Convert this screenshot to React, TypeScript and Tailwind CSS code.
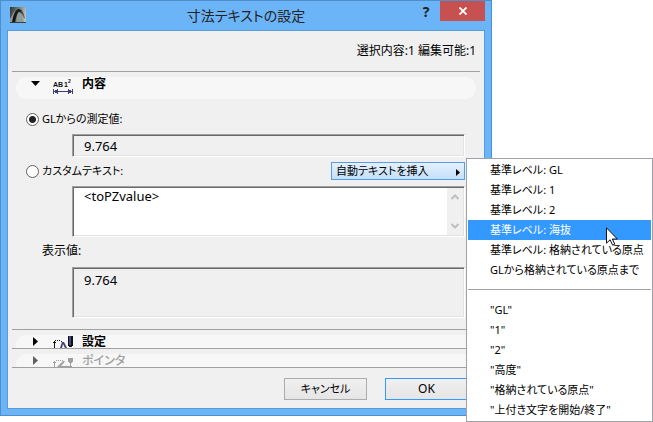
import React from "react";

const levelItems = [
  "基準レベル: GL",
  "基準レベル: 1",
  "基準レベル: 2",
  "基準レベル: 海抜",
  "基準レベル: 格納されている原点",
  "GLから格納されている原点まで",
];

const textItems = [
  '"GL"',
  '"1"',
  '"2"',
  '"高度"',
  '"格納されている原点"',
  '"上付き文字を開始/終了"',
];

const sunken =
  "w-full border border-t-[#a0a0a0] border-l-[#a0a0a0] border-r-white border-b-white shadow-[inset_1px_1px_#696969,inset_-1px_-1px_#e3e3e3]";

const AppLogo = () => (
  <svg className="h-4 w-4" viewBox="0 0 16 16" aria-hidden="true">
    <defs>
      <linearGradient id="logoBg" x1="0" y1="0" x2="1" y2="0.300">
        <stop offset="0" stopColor="#2c3230" />
        <stop offset="0.500" stopColor="#6f7b79" />
        <stop offset="1" stopColor="#b8c0c0" />
      </linearGradient>
      <linearGradient id="logoArch" x1="0" y1="0" x2="1" y2="0">
        <stop offset="0" stopColor="#0e1110" />
        <stop offset="0.600" stopColor="#1f2423" />
        <stop offset="1" stopColor="#7a8583" />
      </linearGradient>
    </defs>
    <rect width="16" height="16" fill="url(#logoBg)" />
    <path d="M0 16V12L4 5 8 2 6 8 4 16z" fill="#8f9794" />
    <path d="M8 4c3 1 5 5 6 12H7c0-5 0-9 1-12z" fill="#919c9a" />
    <path d="M2 16C3 9 5 2 9 2c3 0 5 4 6 9l-1 1c-1-4-3-7-5-7-2 1-3 6-4 11z" fill="url(#logoArch)" />
    <path d="M0 15h16v1H0z" fill="#39413f" />
  </svg>
);

const DimensionIcon = () => (
  <svg className="h-4 w-[21px]" viewBox="0 0 21 16" aria-hidden="true">
    <g fontFamily="Liberation Sans" fontWeight="700" fill="#111">
      <text x="0" y="8" fontSize="7">AB</text>
      <text x="11" y="8" fontSize="7">1</text>
      <text x="15" y="4" fontSize="5">2</text>
    </g>
    <g fill="#3e3e78" shapeRendering="crispEdges">
      <path d="M0 10h1v5H0zM19 10h1v5h-1zM1 12h18v1H1z" />
      <path d="M2 11h2v3H2zM4 10h1v5H4zM16 11h2v3h-2zM15 10h1v5h-1z" />
    </g>
  </svg>
);

const SettingsIcon = () => (
  <svg className="h-[13px] w-[21px]" viewBox="0 0 21 13" aria-hidden="true">
    <g shapeRendering="crispEdges" fill="#111">
      <path d="M1 6h1v7H1zM0 7h1v1H0zM2 7h1v1H2zM2 5h1v1H2zM4 5h1v1H4zM6 5h1v1H6zM8 6h1v1H8z" />
      <path d="M15 1h5v10h-1v1h-3v-1h-1z" />
      <path d="M16 1h2v9h-2z" fill="#46468c" />
    </g>
    <path d="M7 13l2-6h2l3 6h-2l-2-4-1 4z" fill="#3e3e78" />
  </svg>
);

const PointerIcon = () => (
  <svg className="h-[13px] w-[21px]" viewBox="0 0 21 13" aria-hidden="true">
    <g shapeRendering="crispEdges" fill="#a0a0a0">
      <path d="M1 7h1v6H1zM0 8h1v1H0zM2 8h1v1H2zM3 6h1v1H3zM5 6h1v1H5zM7 6h1v1H7zM9 6h1v1H9z" />
      <path d="M15 4h5v4h-1v1h-3V8h-1zM17 9h1v3h-1zM5 12h14v1H5z" />
    </g>
    <path d="M4 13l3-3 3-3h2l-2 3-3 3z" fill="#a0a0a0" />
  </svg>
);

const Cursor = () => (
  <svg
    className="pointer-events-none absolute top-[7px] right-[33px] z-10 h-[19px] w-3"
    viewBox="0 0 12 19"
    aria-hidden="true"
  >
    <path
      d="M.5 .8v15.4l3.6-3.4 2.5 5.4 2.2-1-2.5-5.2h5z"
      fill="#fff"
      stroke="#111"
      strokeWidth="1"
    />
  </svg>
);

const ClosedPanel = (props: { title: string; icon: React.ReactNode; disabled?: boolean }) => {
  return (
    <section className="h-[19px] overflow-hidden border-b border-[#a0a0a0] pt-[5px]">
      <button
        disabled={props.disabled}
        aria-expanded="false"
        className="mx-1 flex h-[22px] w-[calc(100%-8px)] items-start rounded-full bg-[#f7f7f7] pl-[17px] leading-[14px] font-bold text-black disabled:font-medium disabled:text-[#a0a0a0]"
      >
        <svg className="mt-[2px] h-[9px] w-[5px]" viewBox="0 0 5 9" aria-hidden="true">
          <path d="M0 0v9l5-4.500z" fill={props.disabled ? "#606060" : "#000"} />
        </svg>
        <span className="ml-[15px]">{props.icon}</span>
        <span className="ml-2">{props.title}</span>
      </button>
    </section>
  );
};

const MenuItem = (props: { label: string; active?: boolean }) => {
  return (
    <li className="relative" role="none">
      <button
        role="menuitem"
        className={
          props.active
            ? "block h-5 w-full bg-[#3399ff] pl-[22px] text-left leading-5 whitespace-nowrap text-white"
            : "block h-5 w-full pl-[22px] text-left leading-5 whitespace-nowrap text-black"
        }
      >
        {props.label}
      </button>
      {props.active && <Cursor />}
    </li>
  );
};

const AutoTextMenu = () => {
  return (
    <ul
      role="menu"
      className="absolute -top-1 left-[calc(100%+1px)] z-10 w-[187px] border border-[#a0a0a8] bg-white p-px text-[11px]"
    >
      {levelItems.map((label, i) => (
        <MenuItem key={label} label={label} active={i === 3} />
      ))}
      <li role="separator" className="mt-[9px] mb-[10px] h-px bg-[#a0a0a0]" />
      {textItems.map((label) => (
        <MenuItem key={label} label={label} />
      ))}
    </ul>
  );
};

const Radio = (props: { id: string; label: string; checked?: boolean }) => {
  return (
    <div className="flex items-center gap-[3px] text-[11px] leading-4">
      <input
        type="radio"
        name="source"
        id={props.id}
        defaultChecked={props.checked}
        className="h-[13px] w-[13px] appearance-none rounded-full border border-[#606060] bg-white checked:bg-[radial-gradient(circle,#222_0_3px,#fff_4px)]"
      />
      <label htmlFor={props.id}>{props.label}</label>
    </div>
  );
};

const App = () => {
  return (
    <main className="min-h-screen bg-white pr-[161px] font-['Noto_Sans','Noto_Sans_CJK_JP',sans-serif] text-[12px] leading-4 text-black [font-feature-settings:'palt']">
      <div className="border border-[#4d8fcb] bg-[#6bb4f8] px-[6px] pb-[6px]">
        <header className="grid h-[29px] grid-cols-[80px_1fr_80px]">
          <div className="pt-[6px] pl-[3px]">
            <AppLogo />
          </div>
          <h1 className="pt-[5px] text-center text-[14px] leading-5 text-[#222]">
            寸法テキストの設定
          </h1>
          <div className="flex items-start justify-end">
            <button className="h-[22px] w-6 text-[14px] leading-5 font-bold text-[#222]">
              ?
            </button>
            <button
              aria-label="閉じる"
              className="ml-[2px] flex h-5 w-[45px] items-center justify-center bg-[#c75050]"
            >
              <svg className="h-2 w-2" viewBox="0 0 8 8" aria-hidden="true">
                <path d="M.5 .5l7 7M7.500 .5l-7 7" stroke="#fff" strokeWidth="1.800" />
              </svg>
            </button>
          </div>
        </header>

        <div className="border border-[#579bd8] bg-[#f0f0f0] px-1 pb-2">
          <p className="h-10 pt-3 pr-1 text-right">選択内容:1 編集可能:1</p>

          <section className="border-y border-[#a0a0a0] pt-[5px] pb-[11px]">
            <button
              aria-expanded="true"
              className="mx-1 flex h-[22px] w-[calc(100%-8px)] items-start rounded-full bg-[#f7f7f7] pl-[15px] font-bold"
            >
              <svg className="mt-1 h-[5px] w-[9px]" viewBox="0 0 9 5" aria-hidden="true">
                <path d="M0 0h9L4.500 5z" />
              </svg>
              <span className="mt-[2px] ml-[13px]">
                <DimensionIcon />
              </span>
              <span className="ml-2 leading-[14px]">内容</span>
            </button>

            <div className="mt-3 pr-[15px] pl-[14px]">
              <Radio id="fromGl" label="GLからの測定値:" checked />
              <div className="mt-[7px] pl-[46px]">
                <input
                  readOnly
                  aria-label="GLからの測定値"
                  value="9.764"
                  className={`${sunken} block h-[23px] px-[11px] text-[13px] leading-4`}
                />
              </div>

              <div className="mt-[5px] flex h-[18px] items-center justify-between">
                <Radio id="custom" label="カスタムテキスト:" />
                <div className="relative">
                  <button
                    aria-haspopup="menu"
                    aria-expanded="true"
                    className="flex h-[18px] w-[134px] items-center justify-between border border-[#569de5] bg-linear-to-b from-[#e4f0fc] to-[#c4e0fc] pr-1 pl-1 text-[11px]"
                  >
                    自動テキストを挿入
                    <svg className="mt-[2px] h-[7px] w-1" viewBox="0 0 4 7" aria-hidden="true">
                      <path d="M0 0v7l4-3.500z" />
                    </svg>
                  </button>
                  <AutoTextMenu />
                </div>
              </div>

              <div className="mt-[6px] pl-[46px]">
                <div className={`${sunken} flex h-[51px] bg-white p-px`}>
                  <textarea
                    aria-label="カスタムテキスト"
                    defaultValue="<toPZvalue>"
                    className="block flex-1 resize-none overflow-hidden px-[10px] text-[13px] leading-4"
                  />
                  <div className="flex w-4 flex-col items-center justify-between bg-[#f0f0f0] py-[6px]">
                    <svg className="h-[6px] w-2" viewBox="0 0 8 6" aria-hidden="true">
                      <path d="M.5 5L4 1.500 7.500 5" fill="none" stroke="#bfbfbf" strokeWidth="2" />
                    </svg>
                    <svg className="h-[6px] w-2" viewBox="0 0 8 6" aria-hidden="true">
                      <path d="M.5 1L4 4.500 7.500 1" fill="none" stroke="#bfbfbf" strokeWidth="2" />
                    </svg>
                  </div>
                </div>
              </div>

              <label htmlFor="shown" className="mt-[6px] block pl-4">
                表示値:
              </label>
              <div className="mt-2 pl-[46px]">
                <textarea
                  readOnly
                  id="shown"
                  value="9.764"
                  className={`${sunken} block h-[51px] resize-none overflow-hidden px-[11px] py-1 text-[13px] leading-4`}
                />
              </div>
            </div>
          </section>

          <ClosedPanel title="設定" icon={<SettingsIcon />} />
          <ClosedPanel title="ポインタ" icon={<PointerIcon />} disabled />

          <footer className="mt-[10px] flex justify-end gap-[18px] pr-3">
            <button className="h-[22px] w-[83px] border border-[#acacac] bg-linear-to-b from-[#f0f0f0] to-[#e5e5e5] text-[11px]">
              キャンセル
            </button>
            <button className="h-[22px] w-[83px] border border-[#3399ff] bg-linear-to-b from-[#f0f0f0] to-[#e5e5e5]">
              OK
            </button>
          </footer>
        </div>
      </div>
    </main>
  );
};

export default App;
